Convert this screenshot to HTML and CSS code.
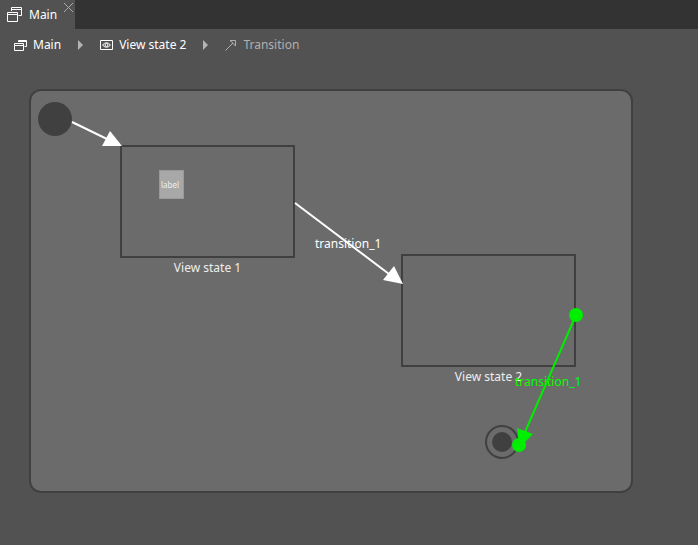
FILE: index.html
```html
<!DOCTYPE html>
<html lang="en">
<head>
    <meta charset="UTF-8">
    <meta name="viewport" content="width=device-width, initial-scale=1.0">
    <title>Main</title>
    <link rel="stylesheet" href="styles.css">
</head>
<body>
    <header class="tab-bar">
        <div class="tab">
            <a href="#main" class="tab-link">
                <svg class="tab-icon" width="15" height="15" viewBox="0 0 15 15">
                    <path d="M4.500 4V.5h10v8h-3M4.500 2.500h10M.5 5.500h10v9H.5zM.5 7.500h10"/>
                </svg>
                Main
            </a>
            <button class="tab-close" type="button" aria-label="Close">
                <svg width="9" height="9" viewBox="0 0 9 9"><path d="M0 0l9 9M9 0L0 9"/></svg>
            </button>
        </div>
    </header>

    <nav class="breadcrumbs">
        <a href="#main" class="crumb">
            <svg class="crumb-icon" width="13" height="11" viewBox="0 0 13 11">
                <path d="M4.500 2V.5h8v6h-2M.5 3.500h9v7h-9zM.5 5.500h9M4.500 1.500h8"/>
            </svg>
            Main
        </a>
        <svg class="separator" width="5" height="10" viewBox="0 0 5 10"><path d="M0 0l5 5-5 5z"/></svg>
        <a href="#view-state-2" class="crumb">
            <svg class="crumb-icon" width="13" height="10" viewBox="0 0 13 10">
                <path d="M.5 .5h12v9H.5zM2.500 5q4-4.500 8 0q-4 4.500-8 0z"/>
                <circle cx="6.500" cy="5" r="1.500"/>
            </svg>
            View state 2
        </a>
        <svg class="separator" width="5" height="10" viewBox="0 0 5 10"><path d="M0 0l5 5-5 5z"/></svg>
        <span class="crumb current">
            <svg class="crumb-icon" width="12" height="12" viewBox="0 0 12 12">
                <path d="M.5 11.500L8 4M5 1.500h5.500V7L8 4.200z"/>
            </svg>
            Transition
        </span>
    </nav>

    <main class="workspace">
        <div class="diagram">
            <div class="start-node"></div>

            <div class="state state-1">
                <div class="state-box"></div>
                <div class="state-name">View state 1</div>
            </div>
            <div class="widget">label</div>

            <div class="state state-2">
                <div class="state-box"></div>
                <div class="state-name">View state 2</div>
            </div>

            <div class="end-node"></div>

            <div class="edge-name edge-name-1">transition_1</div>
            <div class="edge-name edge-name-2">transition_1</div>

            <svg class="edges" width="600" height="400" viewBox="0 0 600 400">
                <g class="edge">
                    <path d="M41 31L76 48"/>
                    <polygon points="79,40 71,55 91,55"/>
                </g>
                <g class="edge">
                    <path d="M264 112L358 183"/>
                    <polygon points="363,175 352,189 372,193"/>
                </g>
                <g class="edge selected">
                    <path d="M545 224L494 341"/>
                    <polygon points="486,337 502,343 488,357"/>
                    <circle cx="545" cy="224" r="7"/>
                    <circle cx="488" cy="354" r="7"/>
                </g>
            </svg>
        </div>
    </main>
</body>
</html>
```

FILE: styles.css
```css
* {
    margin: 0;
    padding: 0;
    box-sizing: border-box;
}

body {
    font-family: 'Noto Sans', 'Open Sans', sans-serif;
    font-size: 12px;
    line-height: 16px;
    color: #fff;
    background: #525252;
    min-height: 100vh;
    display: flex;
    flex-direction: column;
}

a {
    color: inherit;
    text-decoration: none;
}

svg {
    fill: none;
    stroke: currentColor;
    flex: none;
}

/* Tabs */
.tab-bar {
    display: flex;
    height: 29px;
    background: #333;
}

.tab {
    display: flex;
    gap: 7px;
    padding: 0 2px 0 7px;
    background: #525252;
}

.tab-link {
    display: flex;
    align-items: center;
    gap: 7px;
}

.tab-close {
    align-self: flex-start;
    padding-top: 3px;
    border: none;
    background: none;
    color: #aaa;
    line-height: 0;
    cursor: pointer;
}

/* Breadcrumbs */
.breadcrumbs {
    display: flex;
    align-items: center;
    gap: 17px;
    height: 32px;
    padding: 0 14px;
}

.crumb {
    display: flex;
    align-items: center;
    gap: 6px;
}

.separator {
    fill: #b4b4b4;
    stroke: none;
}

.current {
    color: #b0b0b0;
}

/* Diagram */
.workspace {
    flex: 1;
    display: flex;
    padding: 28px 65px 52px 29px;
}

.diagram {
    position: relative;
    flex: 1;
    min-height: 400px;
    border: 2px solid #404040;
    border-radius: 12px;
    background: #6b6b6b;
}

.start-node {
    position: absolute;
    left: 7px;
    top: 11px;
    width: 34px;
    height: 34px;
    border-radius: 50%;
    background: #404040;
}

.state {
    position: absolute;
    width: 175px;
    text-align: center;
    color: #eee;
}

.state-1 {
    left: 89px;
    top: 54px;
}

.state-2 {
    left: 370px;
    top: 163px;
}

.state-box {
    height: 113px;
    border: 2px solid #404040;
    margin-bottom: 2px;
}

.widget {
    position: absolute;
    left: 128px;
    top: 79px;
    width: 25px;
    height: 29px;
    padding-left: 1px;
    border: 1px solid #999;
    background: #a8a8a8;
    color: #eee;
    font-size: 8px;
    line-height: 27px;
}

.end-node {
    position: absolute;
    left: 454px;
    top: 334px;
    width: 34px;
    height: 34px;
    padding: 5px;
    border: 2px solid #404040;
    border-radius: 50%;
    background: #404040 content-box;
}

.edges {
    position: absolute;
    left: 0;
    top: 0;
}

.edge {
    color: #fff;
    stroke-width: 2;
}

.edge polygon,
.edge circle {
    fill: currentColor;
    stroke: none;
}

.edge.selected {
    color: #00ee00;
}

.edge-name {
    position: absolute;
}

.edge-name-1 {
    left: 284px;
    top: 145px;
}

.edge-name-2 {
    left: 484px;
    top: 283px;
    color: #00ff00;
}
```
